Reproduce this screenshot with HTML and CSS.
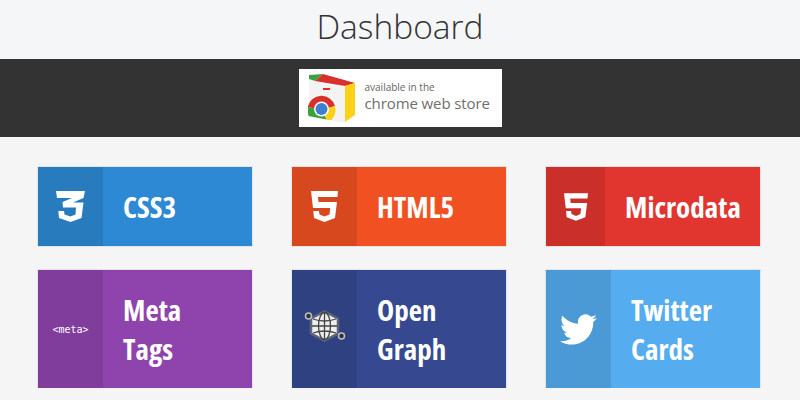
FILE: index.html
```html
<!DOCTYPE html>
<html lang="en">
<head>
	<meta charset="UTF-8">
	<title>Dashboard</title>
	<link rel="stylesheet" href="styles.css">
</head>
<body>
	<h1 class="title">Dashboard</h1>
	<div class="band">
		<a class="store" href="#">
			<svg class="store-icon" width="50" height="58" viewBox="0 0 50 58">
				<defs>
					<clipPath id="face"><polygon points="2,9 39,17 39,54 2,47"/></clipPath>
				</defs>
				<polygon points="3,9 39,17 39,54 3,47" fill="#f3f3f3"/>
				<polygon points="3,6 17,5 9,12 3,10" fill="#3aa13c"/>
				<polygon points="17,5 49,14 39,17 9,12" fill="#d8302c"/>
				<polygon points="39,17 49,14 49,46 39,53" fill="#fcd116"/>
				<rect x="17" y="19" width="7" height="2" fill="#d8302c"/>
				<g clip-path="url(#face)">
					<path d="M15.500 41 L1.800 38 A14 14 0 0 1 29 37 Z" fill="#d8302c"/>
					<path d="M15.500 41 L29 37 A14 14 0 0 1 22 53.400 Z" fill="#fcd116"/>
					<path d="M15.500 41 L22 53.400 A14 14 0 0 1 1.800 38 Z" fill="#3aa13c"/>
					<circle cx="15.500" cy="40" r="7.500" fill="#fff"/>
					<circle cx="15.500" cy="40" r="6" fill="#3f7fd0"/>
				</g>
			</svg>
			<span class="store-text">
				<span class="store-small">available in the</span>
				<span class="store-big">chrome web store</span>
			</span>
		</a>
	</div>
	<div class="grid">
		<a class="card css3" href="#">
			<span class="card-icon">
				<svg width="29" height="31" viewBox="0 0 29 31"><path fill="#fff" d="M0 0H29L27.500 7L17 11.500H27.500L25.500 27L14.500 31L3 27L2.300 20H8L8.500 23.500L14.500 25.500L19.500 23.500L20 16.500H7L6.500 11L16 7H1Z"/></svg>
			</span>
			<span class="card-name">CSS3</span>
		</a>
		<a class="card html5" href="#">
			<span class="card-icon">
				<svg width="27" height="31" viewBox="0 0 27 31"><path fill="#fff" d="M0 0H27L26.400 6H7L7.500 11H26L24 27L13.500 31L3 27L2.300 20H8L8.500 23.500L13.500 25.500L18.500 23.500L19.200 17H2Z"/></svg>
			</span>
			<span class="card-name">HTML5</span>
		</a>
		<a class="card microdata" href="#">
			<span class="card-icon narrow">
				<svg width="24" height="28" viewBox="0 0 27 31"><path fill="#fff" d="M0 0H27L26.400 6H7L7.500 11H26L24 27L13.500 31L3 27L2.300 20H8L8.500 23.500L13.500 25.500L18.500 23.500L19.200 17H2Z"/></svg>
			</span>
			<span class="card-name">Microdata</span>
		</a>
		<a class="card meta" href="#">
			<span class="card-icon meta-tag">&lt;meta&gt;</span>
			<span class="card-name">Meta<br>Tags</span>
		</a>
		<a class="card opengraph" href="#">
			<span class="card-icon">
				<svg width="44" height="40" viewBox="0 0 44 40">
					<line x1="5.500" y1="7" x2="38.500" y2="27" stroke="#aab" stroke-width="1.500"/>
					<polygon points="21.500,2.500 35,9.500 35,24.500 21.500,31.500 8,24.500 8,9.500" fill="#eee" stroke="#5c6478" stroke-width="2.500"/>
					<g fill="none" stroke="#444" stroke-width="1.300">
						<ellipse cx="21.500" cy="17" rx="6" ry="13.500"/>
						<line x1="21.500" y1="3.500" x2="21.500" y2="30.500"/>
						<path d="M10 10Q21.500 14 33 10M9 17H34M10 24Q21.500 20 33 24"/>
					</g>
					<circle cx="5.500" cy="7" r="3" fill="#333" stroke="#b9bdc8" stroke-width="1.500"/>
					<circle cx="38.500" cy="27" r="3" fill="#333" stroke="#b9bdc8" stroke-width="1.500"/>
				</svg>
			</span>
			<span class="card-name">Open<br>Graph</span>
		</a>
		<a class="card twitter" href="#">
			<span class="card-icon">
				<svg width="37" height="31" viewBox="0 2 24 20"><path fill="#fff" d="M23.953 4.570a10 10 0 01-2.825.775 4.958 4.958 0 002.163-2.723c-.951.555-2.005.959-3.127 1.184a4.920 4.920 0 00-8.384 4.482C7.690 8.095 4.067 6.130 1.640 3.162a4.822 4.822 0 00-.666 2.475c0 1.710.870 3.213 2.188 4.096a4.904 4.904 0 01-2.228-.616v.060a4.923 4.923 0 003.946 4.827 4.996 4.996 0 01-2.212.085 4.936 4.936 0 004.604 3.417 9.867 9.867 0 01-6.102 2.105c-.390 0-.779-.023-1.170-.067a13.995 13.995 0 007.557 2.209c9.053 0 13.998-7.496 13.998-13.985 0-.210 0-.420-.015-.630A9.935 9.935 0 0024 4.590z"/></svg>
			</span>
			<span class="card-name">Twitter<br>Cards</span>
		</a>
	</div>
</body>
</html>
```
FILE: styles.css
```css
*{
	margin: 0;
	padding: 0;
	box-sizing: border-box;
}
body{
	background-color: #f5f5f5;
	font-family: "Open Sans", sans-serif;
}
.title{
	height: 59px;
	line-height: 53px;
	background-color: #f5f6f8;
	color: #333;
	font-size: 33.500px;
	font-weight: 300;
	text-align: center;
}
.band{
	height: 78px;
	padding-top: 10px;
	background-color: #333;
}
.store{
	display: flex;
	align-items: center;
	width: 203px;
	height: 58px;
	margin: 0 auto;
	background-color: #fff;
	color: #666;
	text-decoration: none;
}
.store-icon{
	flex: none;
	margin-left: 7px;
}
.store-text{
	display: flex;
	flex-direction: column;
	margin-left: 9px;
	padding-bottom: 3px;
}
.store-small{
	font-size: 10px;
	line-height: 13px;
}
.store-big{
	font-size: 15px;
	letter-spacing: -0.1px;
	line-height: 18px;
	color: #6e6e6e;
	white-space: nowrap;
}
.grid{
	display: grid;
	grid-template-columns: repeat(3, 214px);
	grid-template-rows: 79px 118px;
	column-gap: 40px;
	row-gap: 24px;
	padding: 30px 0 0 38px;
}
.card{
	display: flex;
	color: #fff;
	text-decoration: none;
	box-shadow: 0 0 0 1px #e4e4e4;
}
.card-icon{
	flex: none;
	display: flex;
	align-items: center;
	justify-content: center;
	width: 65px;
	background-color: rgba(0,0,0,0.1);
}
.card-icon.narrow{
	width: 59px;
}
.meta-tag{
	font-family: "DejaVu Sans Mono", monospace;
	font-size: 10px;
}
.card-name{
	align-self: center;
	padding-left: 20px;
	font-size: 29px;
	font-weight: 700;
	font-stretch: 75%;
	line-height: 39px;
}
.css3{
	background-color: #2d89d3;
}
.html5{
	background-color: #f15122;
}
.microdata{
	background-color: #e1352f;
}
.meta{
	background-color: #8f44ad;
}
.opengraph{
	background-color: #364990;
}
.twitter{
	background-color: #55acee;
}
```
